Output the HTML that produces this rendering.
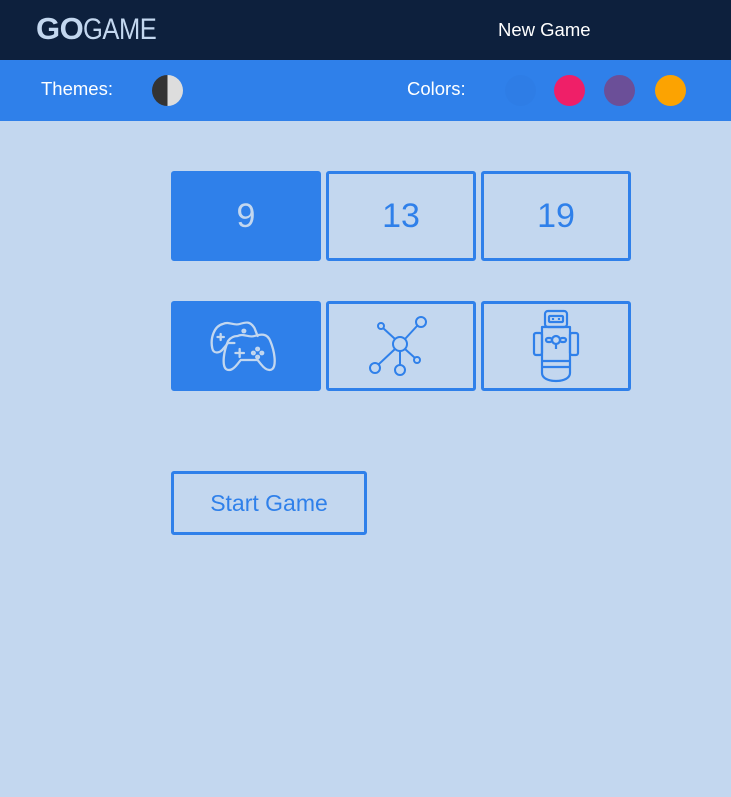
<!DOCTYPE html>
<html><head><style>
*{margin:0;padding:0;box-sizing:border-box}
body{width:731px;height:797px;background:#c3d7ef;font-family:"Liberation Sans",sans-serif;position:relative;overflow:hidden}
.hdr{position:absolute;left:0;top:0;width:731px;height:60px;background:#0d203d}
.logo{position:absolute;left:36px;top:11px;font-size:31px;color:#c3d7ef;letter-spacing:-0.5px}
.logo b{font-weight:bold}
.logo span{font-weight:normal;font-size:30px;transform:scaleX(.85);display:inline-block;transform-origin:left}
.ng{position:absolute;left:498px;top:19px;font-size:18.5px;color:#fff}
.bar{position:absolute;left:0;top:60px;width:731px;height:61px;background:#2f80ea;color:#fff;font-size:18.5px}
.bar .t{position:absolute;top:18px}
.c{position:absolute;top:15px;width:31px;height:31px;border-radius:50%}
.b{position:absolute;width:150px;height:90px;border:3px solid #2f80ea;border-radius:3px;color:#2f80ea;font-size:34px;display:flex;align-items:center;justify-content:center}
.b.on{background:#2f80ea;color:#c3d7ef}
.sg{position:absolute;left:171px;top:471px;width:196px;height:64px;border:3px solid #2f80ea;border-radius:3px;color:#2f80ea;font-size:23px;display:flex;align-items:center;justify-content:center}
</style></head><body>
<div class="hdr"><div class="logo"><b>GO</b><span>GAME</span></div><div class="ng">New Game</div></div>
<div class="bar">
<div class="t" style="left:41px">Themes:</div>
<div class="c" style="left:152px;background:linear-gradient(90deg,#333 50%,#ddd 50%)"></div>
<div class="t" style="left:407px">Colors:</div>
<div class="c" style="left:505px;background:#2e7de6"></div>
<div class="c" style="left:554px;background:#ef1f68"></div>
<div class="c" style="left:604px;background:#6b4f98"></div>
<div class="c" style="left:655px;background:#fca301"></div>
</div>
<div class="b on" style="left:171px;top:171px">9</div>
<div class="b" style="left:326px;top:171px">13</div>
<div class="b" style="left:481px;top:171px">19</div>
<div class="b on" style="left:171px;top:301px">
<svg width="76" height="56" viewBox="0 0 72 56" preserveAspectRatio="none" fill="none" stroke="#c3d7ef" stroke-width="2.2" stroke-linecap="round" stroke-linejoin="round">
<path d="M14 6c6-3 10 2 16 0s10-3 14 4l3 8M14 6C6 8 2 20 4 30c1 6 7 6 11 0l4-5h6"/>
<path d="M28 18c6-3 10 2 16 0s12-3 15 5c4 10 6 24 2 28-4 3-8-1-11-5l-3-4h-16l-3 4c-3 4-7 8-11 5-4-4-2-18 2-28 2-3 5-5 9-5z"/>
<path d="M26 35h8M30 31v8M9 19h6M12 16v6"/>
<circle cx="47" cy="31" r="1.3"/><circle cx="51" cy="35" r="1.3"/><circle cx="47" cy="39" r="1.3"/><circle cx="43" cy="35" r="1.3"/><circle cx="34" cy="13" r="1.3"/>
</svg></div>
<div class="b" style="left:326px;top:301px">
<svg width="64" height="64" viewBox="0 0 64 64" fill="none" stroke="#2f80ea" stroke-width="2">
<circle cx="31" cy="30" r="7"/><circle cx="52" cy="8" r="5"/><circle cx="12" cy="12" r="3"/><circle cx="6" cy="54" r="5"/><circle cx="31" cy="56" r="5"/><circle cx="48" cy="46" r="3"/>
<path d="M36 25l12-13M26 25l-12-11M26 35l-16 15M31 37v14M36 35l10 9"/>
</svg></div>
<div class="b" style="left:481px;top:301px">
<svg width="52" height="74" viewBox="0 0 52 74" fill="none" stroke="#2f80ea" stroke-width="2.2" stroke-linejoin="round">
<rect x="15" y="2" width="22" height="16" rx="3"/><rect x="19" y="7" width="14" height="6" rx="1"/><path d="M23 9v2M29 9v2"/>
<path d="M12 18h28v46c0 5-6 8-14 8s-14-3-14-8z"/>
<path d="M12 52h28M12 58h28"/>
<rect x="4" y="24" width="8" height="22" rx="2"/><rect x="40" y="24" width="8" height="22" rx="2"/>
<circle cx="26" cy="31" r="4"/><rect x="16" y="29" width="6" height="4" rx="2"/><rect x="30" y="29" width="6" height="4" rx="2"/><path d="M26 35v5"/>
</svg></div>
<div class="sg">Start Game</div>
</body></html>
